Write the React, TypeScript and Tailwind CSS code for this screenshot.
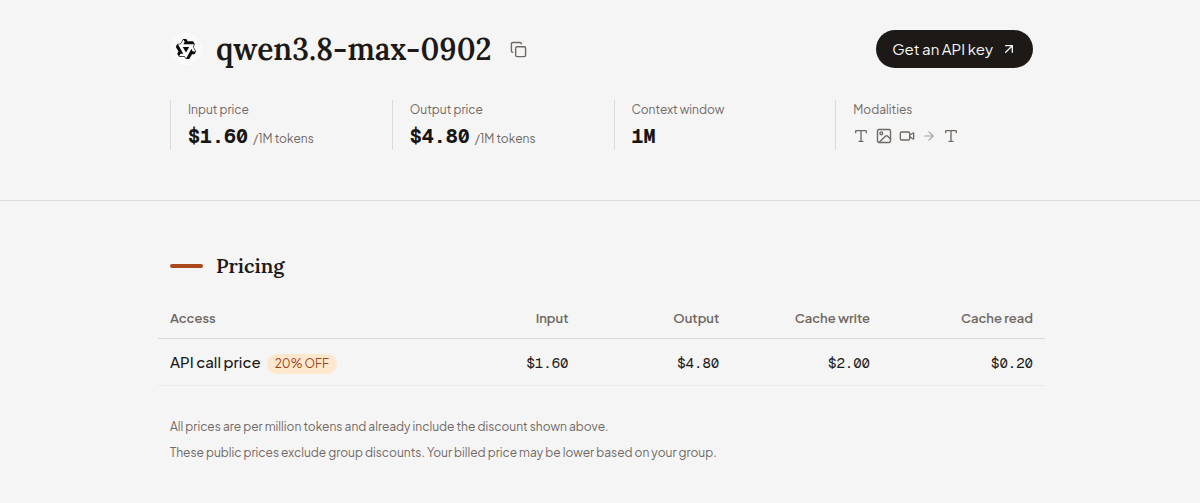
import { ArrowRight, ArrowUpRight, Copy, Type, Video } from 'lucide-react';

const prices = [
  { label: 'Input', value: '$1.60' },
  { label: 'Output', value: '$4.80' },
  { label: 'Cache write', value: '$2.00' },
  { label: 'Cache read', value: '$0.20' },
];

function QwenLogo() {
  return (
    <svg viewBox="0 0 24 24" className="size-[22px]" aria-hidden="true">
      <path
        fill="#0a0a0a"
        d="M12.604 1.34c.393.69.784 1.382 1.174 2.075a.18.18 0 00.157.091h5.552c.174 0 .322.11.446.327l1.454 2.57c.19.337.24.478.024.837-.26.43-.513.864-.76 1.3l-.367.658c-.106.196-.223.28-.04.512l2.652 4.637c.172.301.111.494-.043.77-.437.785-.882 1.564-1.335 2.34-.159.272-.352.375-.68.37-.777-.016-1.552-.01-2.327.016a.099.099 0 00-.081.05 575.097 575.097 0 01-2.705 4.74c-.169.293-.38.363-.725.364-.997.003-2.002.004-3.017.002a.537.537 0 01-.465-.271l-1.335-2.323a.09.09 0 00-.083-.049H4.982c-.285.03-.553-.001-.805-.092l-1.603-2.77a.543.543 0 01-.002-.54l1.207-2.12a.198.198 0 000-.197 550.951 550.951 0 01-1.875-3.272l-.79-1.395c-.16-.31-.173-.496.095-.965.465-.813.927-1.625 1.387-2.436.132-.234.304-.334.584-.335a338.3 338.3 0 012.589-.001.124.124 0 00.107-.063l2.806-4.895a.488.488 0 01.422-.246c.524-.001 1.053 0 1.583-.006L11.704 1c.341-.003.724.032.9.34zm-3.432.403a.06.06 0 00-.052.03L6.254 6.788a.157.157 0 01-.135.078H3.253c-.056 0-.07.025-.041.074l5.81 10.156c.025.042.013.062-.034.063l-2.795.015a.218.218 0 00-.2.116l-1.32 2.31c-.044.078-.021.118.068.118l5.716.008c.046 0 .08.02.104.061l1.403 2.454c.046.081.092.082.139 0l5.006-8.76.783-1.382a.055.055 0 01.096 0l1.424 2.53a.122.122 0 00.107.062l2.763-.02a.04.04 0 00.035-.02.041.041 0 000-.04l-2.9-5.086a.108.108 0 010-.113l.293-.507 1.12-1.977c.024-.041.012-.062-.035-.062H9.2c-.059 0-.073-.026-.043-.077l1.434-2.505a.107.107 0 000-.114L9.225 1.774a.06.06 0 00-.053-.031zm6.29 8.02c.046 0 .058.02.034.06l-.832 1.465-2.613 4.585a.056.056 0 01-.05.029.058.058 0 01-.05-.029L8.498 9.841c-.02-.034-.01-.052.028-.054l.216-.012 6.722-.012z"
      />
    </svg>
  );
}

function ImageIcon() {
  return (
    <svg viewBox="0 0 16 16" className="size-4" fill="none" stroke="currentColor" strokeWidth="1.4" aria-hidden="true">
      <rect x="1.5" y="1.5" width="13" height="13" rx="1.4" />
      <circle cx="5.3" cy="5.3" r="1.4" />
      <path d="M3.2 14.2L9.6 8.1Q10.5 7.3 11.4 8.1L14.3 10.8" strokeLinecap="round" />
    </svg>
  );
}

function Stat({ label, value, unit }: { label: string; value: string; unit?: string }) {
  return (
    <div className="h-[50px] border-l border-[#dedad6] pl-[17px]">
      <dt className="text-xs leading-5">{label}</dt>
      <dd className="mt-1 flex items-baseline gap-[5px] leading-6">
        <span className="font-['Geist_Mono','Roboto_Mono',monospace] text-xl leading-6 font-bold text-[#171412]">
          {value}
        </span>
        {unit && <span className="text-xs">{unit}</span>}
      </dd>
    </div>
  );
}

export default function App() {
  return (
    <div className="min-h-screen bg-[#f5f5f5] font-['Plus_Jakarta_Sans','Inter',sans-serif] text-[#706864]">
      {/* Model header */}
      <header className="border-b border-[#dddbd8] px-4 pt-[27px] pb-[50px]">
        <div className="mx-auto max-w-[866px] pl-[3px]">
          <div className="flex items-center justify-between">
            <div className="flex items-center">
              <span className="flex size-8 items-center justify-center rounded-full bg-[#fafafa]">
                <QwenLogo />
              </span>
              <h1 className="ml-[14px] font-['Lora','Liberation_Serif',serif] text-[30px] leading-[44px] font-semibold text-[#1c1917]">
                qwen3.8-max-0902
              </h1>
              <button type="button" aria-label="Copy model name" className="ml-[18px]">
                <Copy size={17} strokeWidth={2} />
              </button>
            </div>
            <a
              href="#"
              className="flex h-[38px] items-center gap-2 rounded-full bg-[#1c1917] px-4 text-[15px] text-[#fafaf9]"
            >
              Get an API key
              <ArrowUpRight size={16} strokeWidth={2} />
            </a>
          </div>

          <dl className="mt-[29px] grid grid-cols-4 gap-6">
            <Stat label="Input price" value="$1.60" unit="/1M tokens" />
            <Stat label="Output price" value="$4.80" unit="/1M tokens" />
            <Stat label="Context window" value="1M" />
            <div className="h-[50px] border-l border-[#dedad6] pl-[17px]">
              <dt className="text-xs leading-5">Modalities</dt>
              <dd className="mt-2 flex items-center gap-[7px]">
                <Type size={16} strokeWidth={2} />
                <ImageIcon />
                <Video size={16} strokeWidth={2} />
                <ArrowRight size={14} strokeWidth={2} className="text-[#a8a29e]" />
                <Type size={16} strokeWidth={2} />
              </dd>
            </div>
          </dl>
        </div>
      </header>

      {/* Pricing */}
      <section className="px-4 pt-[50px] pb-9">
        <div className="mx-auto max-w-[866px] pl-[3px]">
          <div className="flex items-center gap-[13px]">
            <span className="h-1 w-[33px] rounded-full bg-[#a8481c]" />
            <h2 className="font-['Lora','Liberation_Serif',serif] text-xl leading-[30px] font-semibold text-[#1c1917]">
              Pricing
            </h2>
          </div>

          <div className="-mx-3 mt-[17px]">
            <table className="w-full table-fixed">
              <thead>
                <tr className="h-10 border-b border-[#dedad6] text-[13px]">
                  <th className="px-3 pt-0.5 text-left font-semibold">Access</th>
                  {prices.map((p) => (
                    <th key={p.label} className="w-[17%] px-3 pt-0.5 text-right font-semibold last:w-[163px]">
                      {p.label}
                    </th>
                  ))}
                </tr>
              </thead>
              <tbody>
                <tr className="h-[47px] border-b border-[#ebebeb] text-sm text-[#1c1917]">
                  <th className="px-3 pt-0.5 text-left text-[15px] font-medium">
                    API call price
                    <span className="ml-1.5 inline-block rounded-full bg-[#fde8cd] px-2 text-xs leading-5 font-normal text-[#a0441c]">
                      20% OFF
                    </span>
                  </th>
                  {prices.map((p) => (
                    <td key={p.label} className="px-3 pt-0.5 text-right font-['Geist_Mono','Roboto_Mono',monospace]">
                      {p.value}
                    </td>
                  ))}
                </tr>
              </tbody>
            </table>
          </div>

          <div className="mt-7 text-xs leading-[26px]">
            <p>All prices are per million tokens and already include the discount shown above.</p>
            <p>These public prices exclude group discounts. Your billed price may be lower based on your group.</p>
          </div>
        </div>
      </section>
    </div>
  );
}
